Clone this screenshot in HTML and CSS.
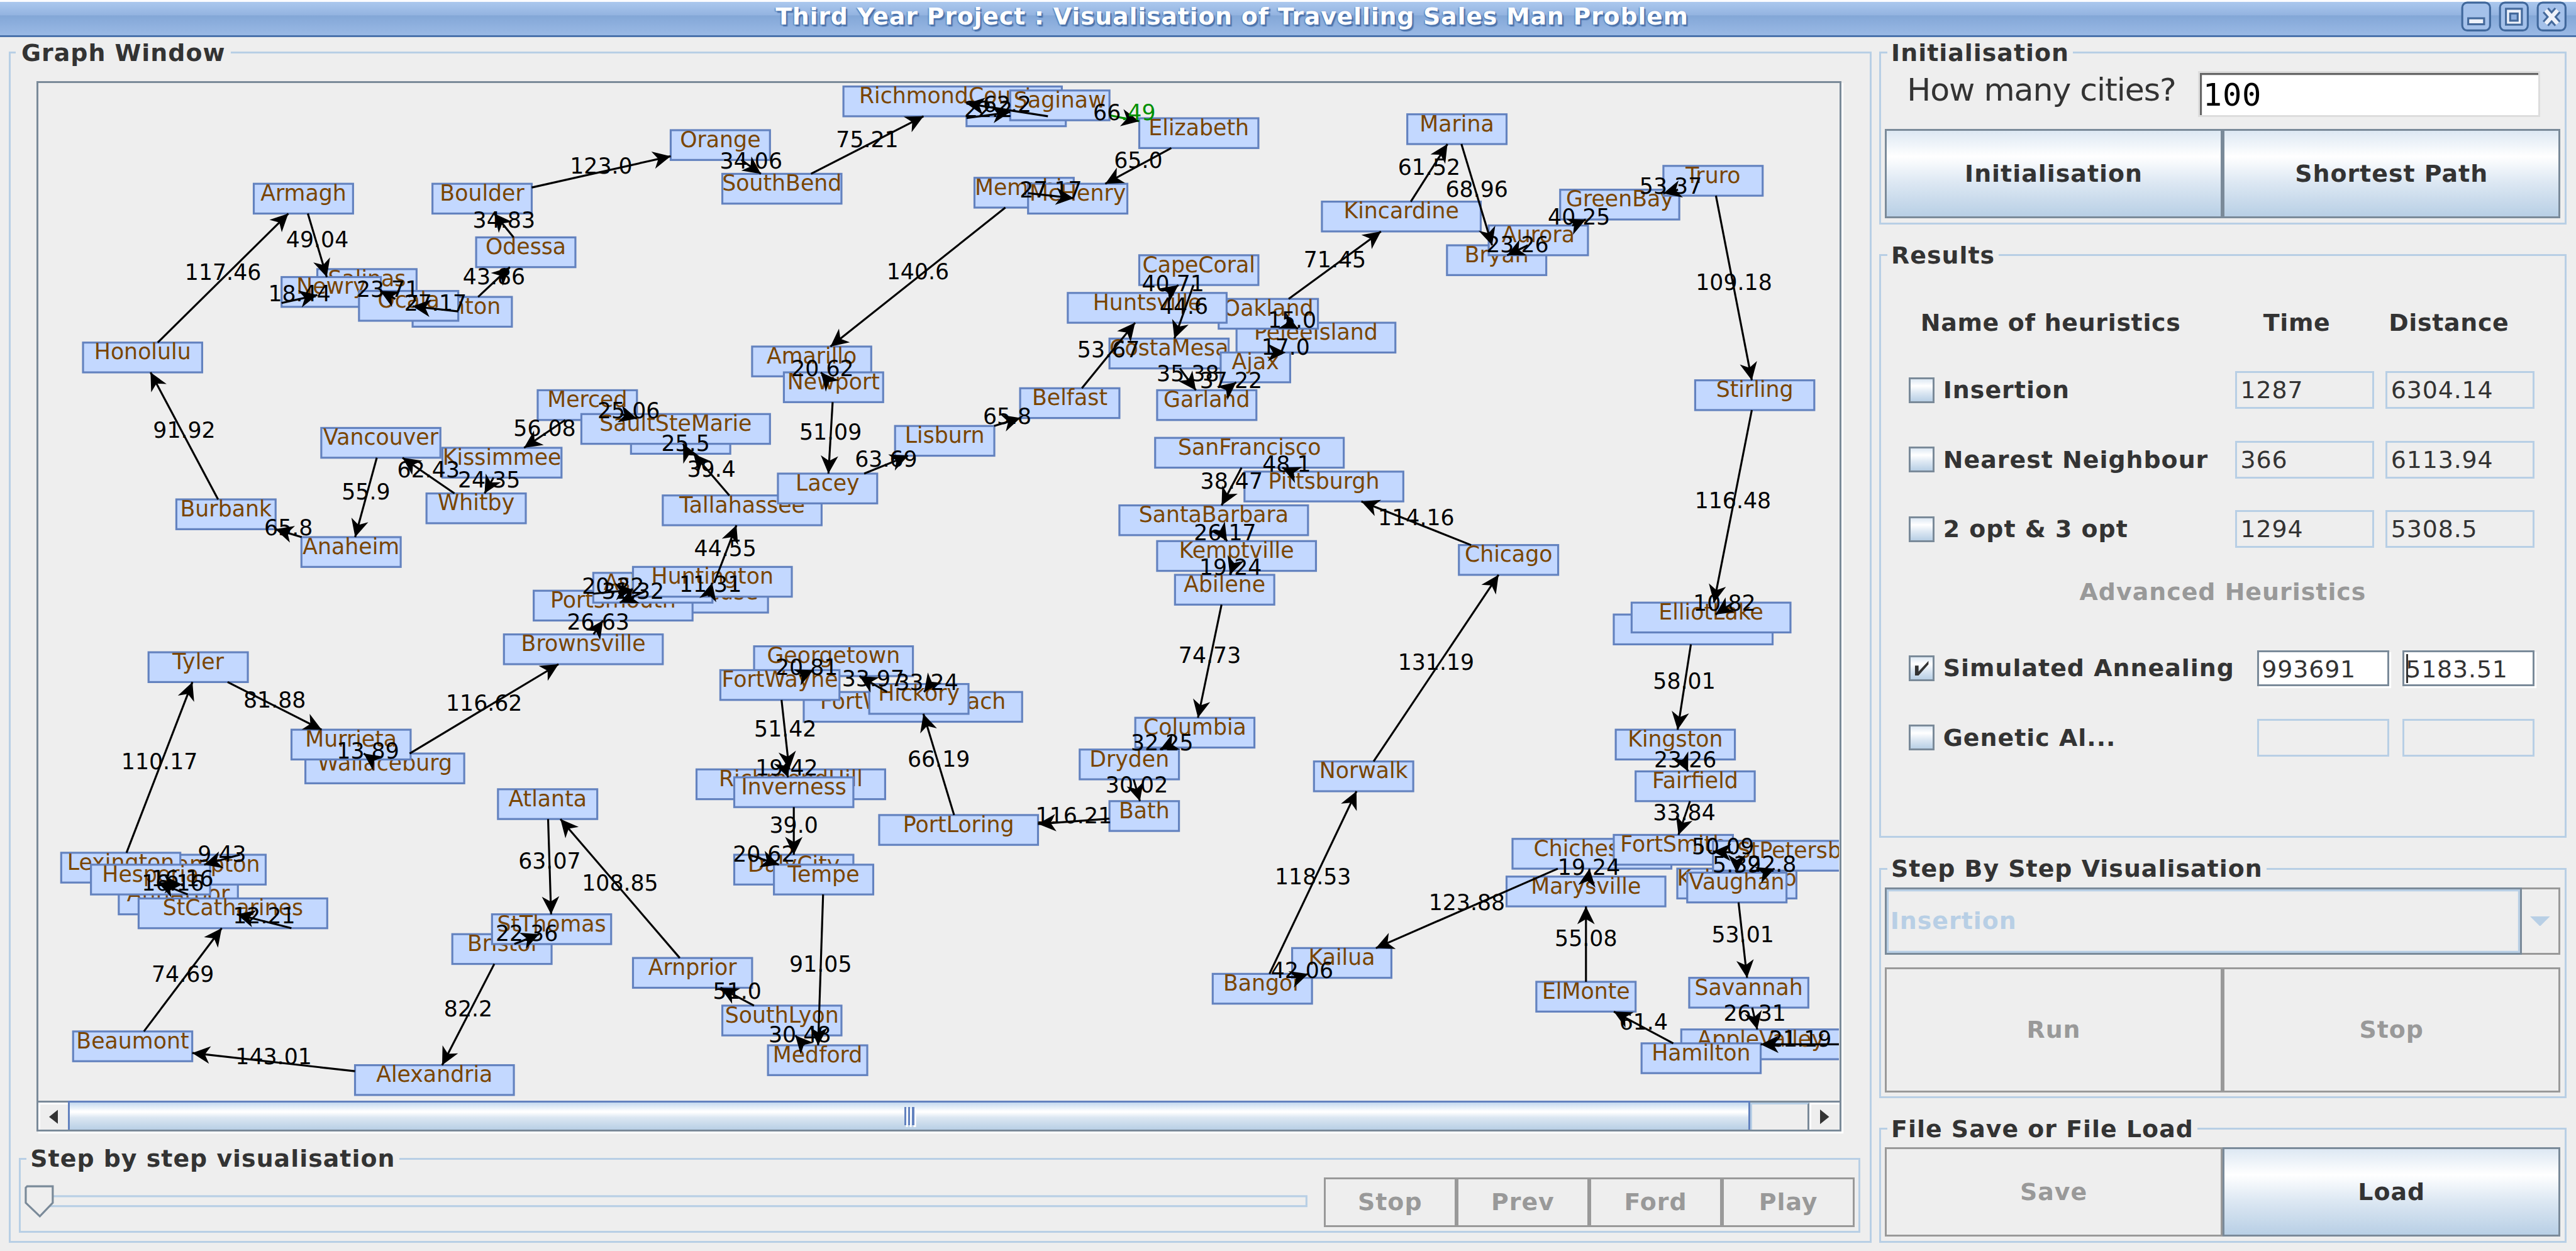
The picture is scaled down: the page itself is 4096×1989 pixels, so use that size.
FILE: index.html
```html
<!DOCTYPE html>
<html lang="en">
<head>
<meta charset="utf-8">
<title>Third Year Project : Visualisation of Travelling Sales Man Problem</title>
<link rel="stylesheet" href="styles.css">
</head>
<body>
<header class="titlebar">
  <h1 class="titlebar-text">Third Year Project : Visualisation of Travelling Sales Man Problem</h1>
  <div class="window-buttons">
    <svg class="window-button" viewBox="0 0 16 16"><rect class="wb-frame" x="1" y="1" width="14" height="14" rx="2.5"/><rect class="wb-dark" x="3.5" y="8.4" width="9" height="4"/><rect class="wb-light" x="4.5" y="9.4" width="7" height="2"/></svg>
    <svg class="window-button" viewBox="0 0 16 16"><rect class="wb-frame" x="1" y="1" width="14" height="14" rx="2.5"/><rect class="wb-dark" x="3.5" y="3.6" width="9" height="9"/><rect class="wb-light" x="4.5" y="4.6" width="7" height="7"/><rect class="wb-dark" x="5.6" y="6" width="4.8" height="4.6"/><rect class="wb-mid" x="6.6" y="7" width="2.8" height="2.6"/></svg>
    <svg class="window-button" viewBox="0 0 16 16"><rect class="wb-frame" x="1" y="1" width="14" height="14" rx="2.5"/><path class="wb-x-dark" d="M5 4.8 11 11.6M11 4.8 5 11.6"/><path class="wb-x-light" d="M5 4.8 11 11.6M11 4.8 5 11.6"/></svg>
  </div>
</header>
<main class="workspace">
  <fieldset class="group graph-group">
    <legend class="legend">Graph Window</legend>
    <div class="scroll-pane">
      <svg class="graph" id="graph" viewBox="19 41.75 907 512.5" preserveAspectRatio="none"></svg>
      <div class="scrollbar">
        <div class="scroll-button scroll-left"><svg class="scroll-arrow" viewBox="0 0 5 8"><path d="M5 0V8L0 4z"/></svg></div>
        <div class="scroll-thumb"><i class="grip"></i><i class="grip"></i><i class="grip"></i></div>
        <div class="scroll-track"></div>
        <div class="scroll-button scroll-right"><svg class="scroll-arrow" viewBox="0 0 5 8"><path d="M0 0V8L5 4z"/></svg></div>
      </div>
    </div>
    <fieldset class="group player-group">
      <legend class="legend">Step by step visualisation</legend>
      <div class="player">
        <svg class="slider" viewBox="10.4 590.5 650 29"><rect class="slider-track" x="20" y="602.5" width="638" height="5"/><path class="slider-knob" d="M13.6 597.5H26.5V605.8L20 612.6 12.9 605.8V598.2z"/></svg>
        <div class="button-row player-buttons">
          <button class="button" disabled>Stop</button><button class="button" disabled>Prev</button><button class="button" disabled>Ford</button><button class="button" disabled>Play</button>
        </div>
      </div>
    </fieldset>
  </fieldset>
  <aside class="sidebar">
    <fieldset class="group init-group">
      <legend class="legend">Initialisation</legend>
      <div class="city-count"><label class="city-count-label">How many cities?</label><div class="city-count-field">100</div></div>
      <div class="button-row tall-45"><button class="button">Initialisation</button><button class="button">Shortest Path</button></div>
    </fieldset>
    <fieldset class="group results-group">
      <legend class="legend">Results</legend>
      <div class="result-head"><span class="head-name">Name of heuristics</span><span class="head-time">Time</span><span>Distance</span></div>
      <div class="result-row"><i class="check"></i><span class="result-name">Insertion</span><div class="field time">1287</div><div class="field distance">6304.14</div></div>
      <div class="result-row"><i class="check"></i><span class="result-name">Nearest Neighbour</span><div class="field time">366</div><div class="field distance">6113.94</div></div>
      <div class="result-row"><i class="check"></i><span class="result-name">2 opt &amp; 3 opt</span><div class="field time">1294</div><div class="field distance">5308.5</div></div>
      <div class="result-row advanced">Advanced Heuristics</div>
      <div class="result-row"><i class="check"><svg class="tick" viewBox="0 0 11 11"><path d="M2.2 4.2H4V7.2L9 1.8V3.6L4 9.2H2.2z"/></svg></i><span class="result-name">Simulated Annealing</span><div class="field narrow active">993691</div><div class="field narrow active focused">5183.51</div></div>
      <div class="result-row"><i class="check"></i><span class="result-name">Genetic Al...</span><div class="field narrow"></div><div class="field narrow"></div></div>
    </fieldset>
    <fieldset class="group step-group">
      <legend class="legend">Step By Step Visualisation</legend>
      <div class="combo"><div class="combo-value">Insertion</div><div class="combo-arrow"><svg class="combo-triangle" viewBox="0 0 10 5"><path d="M0 0H10L5 5z"/></svg></div></div>
      <div class="button-row tall-63"><button class="button" disabled>Run</button><button class="button" disabled>Stop</button></div>
    </fieldset>
    <fieldset class="group file-group">
      <legend class="legend">File Save or File Load</legend>
      <div class="button-row tall-45"><button class="button" disabled>Save</button><button class="button">Load</button></div>
    </fieldset>
  </aside>
</main>
<script src="graph.js"></script>
</body>
</html>
```
FILE: styles.css
```css
/* 1rem is one Swing pixel */
html { font-size: 3.1569px; }
* { box-sizing: border-box; }
body {
  margin: 0;
  width: 100vw;
  height: 100vh;
  overflow: hidden;
  background: #eee;
  color: #333;
  font: bold 12rem/14rem "DejaVu Sans", sans-serif;
  letter-spacing: .32rem;
}

.titlebar {
  display: flex;
  align-items: flex-start;
  height: 18.8rem;
  border-top: 1rem solid #fbfcfe;
  border-bottom: 1rem solid #4a72ab;
  background: linear-gradient(#abc8ee, #93b3e0 40%, #83a7d7 41%, #9ab9e5);
}
.titlebar-text {
  flex: 1;
  margin: 0;
  padding-left: 2rem;
  padding-top: .4rem;
  font-size: 12rem;
  line-height: 14rem;
  letter-spacing: .25rem;
  text-align: center;
  color: #fff;
  text-shadow: .8rem .8rem .4rem #4a72ab, -.3rem .3rem .6rem #4a72ab;
}
.window-buttons { display: flex; gap: 3rem; width: 58.4rem; margin-top: -.7rem; }
.window-button { width: 16rem; height: 16rem; }
.wb-frame { fill: #a4c1ea; stroke: #40689c; stroke-width: 1; }
.wb-dark { fill: #44699b; }
.wb-light { fill: #eef2fa; }
.wb-mid { fill: #8fb0df; }
.wb-x-dark { stroke: #44699b; stroke-width: 4; fill: none; }
.wb-x-light { stroke: #eef2fa; stroke-width: 2; fill: none; }

.workspace { display: flex; gap: 4rem; padding: .7rem 0 0 4.4rem; }
.group { margin: 0; padding: 0; min-width: 0; border: 1rem solid #b8cfe5; }
.legend { margin-left: 3rem; padding: 0 2rem; height: 14rem; white-space: nowrap; }
.graph-group { width: 938.2rem; height: 606.5rem; }
.graph-group > .legend { margin-left: 2.6rem; padding: 0 2.8rem; }

.scroll-pane {
  margin: 7.5rem 0 0 13rem;
  width: 909rem;
  height: 529rem;
  border: 1rem solid #7a8a99;
  box-shadow: 1rem 1rem 0 #fff;
}
.graph { display: block; width: 907rem; height: 512.4rem; }
.scrollbar { display: flex; height: 14.6rem; border-top: 1rem solid #7a8a99; }
.scroll-button { display: flex; align-items: center; padding-left: 4.4rem; background: #eee; border-top: 1rem solid #fff; border-left: 1rem solid #fff; }
.scroll-left { width: 15rem; }
.scroll-right { width: 15rem; }
.scroll-arrow { width: 4.6rem; height: 8rem; fill: #333; }
.scroll-thumb {
  display: flex;
  justify-content: center;
  align-items: center;
  gap: 1rem;
  width: 847.3rem;
  margin-top: -1rem;
  border: 1rem solid #6382bf;
  border-bottom: 0;
  background: linear-gradient(#c4d9ef, #fff 32%, #fff 36%, #dce7f2 55%, #b8cfe5);
}
.grip { width: 1rem; height: 9rem; background: #6382bf; box-shadow: .8rem .9rem 0 #fff; }
.scroll-track { flex: 1; border-top: 1rem solid #b8cfe5; border-left: 1rem solid #b8cfe5; border-right: 1rem solid #7a8a99; }

.player-group { width: 927.7rem; height: 44.5rem; margin: 6.5rem 0 0 4rem; }
.player { display: flex; }
.slider { width: 650rem; height: 29rem; }
.slider-track { fill: none; stroke: #b8cfe5; stroke-width: 1; }
.slider-knob { fill: #eee; stroke: #7a8a99; stroke-width: 1; }
.player-buttons { width: 267.5rem; height: 25rem; margin: 2.4rem 0 0 6.4rem; }

.button-row { display: flex; }
.init-group .button-row, .step-group .button-row, .file-group .button-row { width: 340.3rem; margin-left: 1.8rem; }
.tall-45 { height: 45rem; }
.tall-63 { height: 63rem; }
.button {
  flex: 1;
  padding: 0;
  border: 1rem solid #7a8a99;
  border-radius: 0;
  background: linear-gradient(#dde8f3, #fff 30%, #dde8f3 60%, #b8cfe5);
  color: #333;
  font: inherit;
  letter-spacing: inherit;
}
.button:disabled { border-color: #999; background: #eee; color: #999; }

.sidebar { display: flex; flex-direction: column; gap: 8.5rem; width: 346rem; }
.init-group { height: 93.5rem; }
.city-count { display: flex; height: 31.5rem; padding: 2.4rem 0 0 13rem; font-weight: normal; }
.city-count-label { width: 146.7rem; font-size: 16rem; line-height: 19rem; letter-spacing: -.33rem; white-space: nowrap; }
.city-count-field {
  width: 172.3rem;
  height: 23rem;
  padding-left: 1.4rem;
  border: 1rem solid #ddd;
  background: #fff;
  box-shadow: inset 1rem 1rem 0 #666;
  color: #000;
  font: 16rem/22rem "DejaVu Sans Mono", monospace;
  letter-spacing: .2rem;
}

.results-group { height: 300.5rem; }
.result-head { display: flex; height: 43.5rem; padding: 20.1rem 0 0 19.8rem; letter-spacing: .22rem; white-space: nowrap; }
.head-name { width: 172.6rem; }
.head-time { width: 63.2rem; }
.result-row { display: flex; align-items: center; height: 35rem; padding: 0 15.1rem 0 13.8rem; }
.check { position: relative; width: 13rem; height: 13rem; border: 1rem solid #7a8a99; background: linear-gradient(#dde8f3, #fff 30%, #dde8f3 60%, #b8cfe5); }
.tick { display: block; width: 11rem; height: 11rem; fill: #333; }
.result-name { flex: 1; padding-left: 4.4rem; white-space: nowrap; }
.field { height: 19rem; margin-left: 5.8rem; padding-left: 1.8rem; border: 1rem solid #b8cfe5; font-weight: normal; line-height: 17.4rem; letter-spacing: .27rem; }
.time { width: 70rem; }
.distance { width: 75rem; }
.narrow { width: 66.6rem; margin-left: 6.4rem; }
.active { height: 18rem; padding-left: 1.3rem; border-color: #7a8a99; background: #fff; box-shadow: 1rem 1rem 0 #fff; }
.focused { position: relative; padding-left: .8rem; }
.focused::before { content: ""; position: absolute; left: 1rem; top: 1rem; width: 1rem; height: 14.6rem; background: #333; }
.advanced { justify-content: center; padding: 0 0 7rem; color: #999; }

.step-group { height: 122.5rem; }
.combo { display: flex; width: 340.3rem; height: 34rem; margin: 2.4rem 0 6.2rem 1.8rem; color: #b8cfe5; }
.combo-value { flex: 1; padding-left: 1.8rem; border: 1rem solid #7a8a99; box-shadow: inset 0 0 0 1rem #b8cfe5; line-height: 32rem; }
.combo-arrow { display: flex; align-items: center; justify-content: center; width: 19.5rem; border: 1rem solid #999; border-left: 0; }
.combo-triangle { width: 10rem; height: 5rem; fill: #b8cfe5; }
.file-group { height: 64.5rem; }
.file-group .button-row { margin-top: 2.4rem; }

/* graph canvas */
.city { fill: #c3d8ff; stroke: #6382bf; stroke-width: 1; }
.city-name { font: 11px "DejaVu Sans", sans-serif; letter-spacing: 0; text-anchor: middle; fill: #7a4500; }
.edge { stroke: #000; stroke-width: 1; }
.head { fill: #000; }
.cost { font: 11px "DejaVu Sans", sans-serif; letter-spacing: 0; text-anchor: middle; fill: #000; }
.start { stroke: #009000; }
.start-text { fill: #009000; }
```
FILE: graph.js
```js
// Cities in painting order: id, x, y, label (default: id), box width (default: by label length)
const cities = [
  ["Armagh", 127, 92], ["Boulder", 217, 92], ["Odessa", 239, 119],
  ["Salinas", 159, 135], ["Newry", 141, 139], ["Clinton", 207, 149], ["Ocala", 180, 146],
  ["Honolulu", 41, 172], ["Merced", 270, 196], ["Orange", 337, 65], ["SouthBend", 363, 87],
  ["n1", 486, 48, "", 51], ["RichmondCounty", 424, 43], ["Saginaw", 508, 45],
  ["Elizabeth", 573, 59], ["Memphis", 490, 89], ["McHenry", 517, 92],
  ["Amarillo", 378, 174], ["Newport", 394, 187], ["CapeCoral", 573, 128],
  ["PeleeIsland", 622, 162], ["Oakland", 613, 150], ["Huntsville", 537, 147],
  ["CostaMesa", 558, 170], ["Ajax", 614, 177], ["Garland", 582, 196], ["Belfast", 513, 195],
  ["Marina", 708, 57], ["Kincardine", 665, 101], ["GreenBay", 785, 95], ["Truro", 837, 83],
  ["Bryan", 728, 123], ["Aurora", 749, 113], ["Stirling", 853, 191],
  ["Vancouver", 161, 215], ["Kissimmee", 222, 225], ["Whitby", 214, 248],
  ["Anaheim", 151, 270], ["Burbank", 88, 251],
  ["n2", 317, 213, "", 51], ["SaultSteMarie", 292, 208],
  ["Tallahassee", 333, 249], ["Lacey", 391, 238], ["Lisburn", 450, 214],
  ["Syracuse", 326, 293], ["Portsmouth", 268, 297], ["Asheville", 298, 288], ["Huntington", 318, 285],
  ["Brownsville", 253, 319], ["Georgetown", 379, 325], ["FortWaltonBeach", 404, 348],
  ["FortWayne", 362, 337], ["Hickory", 437, 344], ["RichmondHill", 350, 387], ["Inverness", 369, 391],
  ["Tyler", 74, 328], ["Wallaceburg", 153, 379], ["Murrieta", 146, 367],
  ["SanFrancisco", 581, 220], ["Pittsburgh", 626, 237], ["SantaBarbara", 563, 254],
  ["Kemptville", 582, 272], ["Abilene", 591, 289], ["Chicago", 734, 274], ["Norwalk", 661, 383],
  ["Columbia", 571, 361], ["Dryden", 543, 377], ["Bath", 558, 403],
  ["n3", 812, 309, "", 81], ["ElliotLake", 821, 303], ["Kingston", 813, 367], ["Fairfield", 823, 388],
  ["Atlanta", 250, 397], ["AnnArbor", 59, 445], ["Southampton", 53, 430], ["Lexington", 30, 429],
  ["Hesperia", 45, 435], ["StCatharines", 69, 452], ["Beaumont", 36, 519], ["Alexandria", 178, 536],
  ["Bristol", 227, 470], ["StThomas", 247, 460], ["DalyCity", 369, 430], ["Tempe", 389, 435],
  ["Medford", 386, 526], ["SouthLyon", 363, 506], ["Arnprior", 318, 482], ["PortLoring", 442, 410],
  ["Bangor", 610, 490], ["Kailua", 650, 477], ["Chichester", 761, 422], ["Marysville", 758, 441],
  ["ElMonte", 773, 494], ["AppleValley", 846, 518], ["Hamilton", 826, 525], ["Savannah", 850, 492],
  ["Kalamazoo", 844, 437], ["FortSmith", 812, 420], ["StPetersburg", 862, 423], ["Vaughan", 849, 439]
];

// The tour, in visiting order
const tour = ["Saginaw", "Elizabeth", "McHenry", "Memphis", "Amarillo", "Newport", "Lacey", "Lisburn",
  "Belfast", "Huntsville", "CapeCoral", "CostaMesa", "Garland", "Ajax", "PeleeIsland", "Oakland",
  "Kincardine", "Marina", "Bryan", "Aurora", "GreenBay", "Truro", "Stirling", "ElliotLake", "n3",
  "Kingston", "Fairfield", "FortSmith", "StPetersburg", "Kalamazoo", "Vaughan", "Savannah",
  "AppleValley", "Hamilton", "ElMonte", "Marysville", "Chichester", "Kailua", "Bangor", "Norwalk",
  "Chicago", "Pittsburgh", "SanFrancisco", "SantaBarbara", "Kemptville", "Abilene", "Columbia",
  "Dryden", "Bath", "PortLoring", "Hickory", "FortWaltonBeach", "Georgetown", "FortWayne",
  "RichmondHill", "Inverness", "DalyCity", "Tempe", "Medford", "SouthLyon", "Arnprior", "Atlanta",
  "StThomas", "Bristol", "Alexandria", "Beaumont", "StCatharines", "AnnArbor", "Southampton",
  "Hesperia", "Lexington", "Tyler", "Murrieta", "Wallaceburg", "Brownsville", "Portsmouth",
  "Asheville", "Huntington", "Syracuse", "Tallahassee", "n2", "SaultSteMarie", "Merced",
  "Kissimmee", "Whitby", "Vancouver", "Anaheim", "Burbank", "Honolulu", "Armagh", "Newry",
  "Salinas", "Ocala", "Clinton", "Odessa", "Boulder", "Orange", "SouthBend", "RichmondCounty",
  "n1", "Saginaw"];

const NS = "http://www.w3.org/2000/svg";
const root = document.getElementById("graph");
const H = 15;

function add(tag, attrs, text) {
  const el = document.createElementNS(NS, tag);
  for (const k in attrs) el.setAttribute(k, attrs[k]);
  if (text) el.textContent = text;
  root.appendChild(el);
  return el;
}

function boxWidth(s) {
  const n = s.length;
  return n <= 4 ? 36 : n <= 7 ? 51 : n <= 9 ? 61 : n <= 11 ? 81 : n <= 13 ? 96 : 111;
}

const nodes = {};
for (const [id, x, y, label = id, width] of cities) {
  const w = (width || boxWidth(label)) - 1;
  nodes[id] = { x, y, w, cx: x + .5 + w / 2, cy: y + .5 + H / 2 };
  add("rect", { class: "city", x: x + .5, y: y + .5, width: w, height: H });
  if (label) add("text", { class: "city-name", x: x + .5 + w / 2, y: y + 9 }, label);
}

// Point where the ray from the box centre towards (px, py) leaves the box
function perimeter(n, px, py) {
  const dx = px - n.cx, dy = py - n.cy;
  // no direction: leave through the right side
  if (Math.hypot(dx, dy) < .01) return [n.cx + n.w / 2, n.cy];
  const t = Math.min(n.w / 2 / Math.abs(dx || 1e-6), H / 2 / Math.abs(dy || 1e-6));
  return [n.cx + dx * t, n.cy + dy * t];
}

for (let i = 0; i + 1 < tour.length; i++) {
  const a = nodes[tour[i]], b = nodes[tour[i + 1]];
  const [tx, ty] = perimeter(b, a.cx, a.cy);
  const [sx, sy] = perimeter(a, tx, ty);
  const angle = Math.atan2(ty - sy, tx - sx) * 180 / Math.PI;
  const first = i === 0;
  add("line", { class: first ? "edge start" : "edge", x1: sx, y1: sy, x2: tx, y2: ty });
  add("path", { class: "head", d: "M0 0L-9 -4.4L-6.4 0L-9 4.4z", transform: `translate(${tx} ${ty}) rotate(${angle})` });
  let cost = String(Math.round(Math.hypot(a.x - b.x, a.y - b.y) * 100) / 100);
  if (!cost.includes(".")) cost += ".0";
  const label = add("text", { class: "cost", x: (sx + tx) / 2, y: (sy + ty) / 2 + 1 });
  if (first) {
    const [whole, frac] = cost.split(".");
    label.append(whole);
    const tail = document.createElementNS(NS, "tspan");
    tail.setAttribute("class", "start-text");
    tail.textContent = "." + frac;
    label.append(tail);
  } else {
    label.textContent = cost;
  }
}
```
